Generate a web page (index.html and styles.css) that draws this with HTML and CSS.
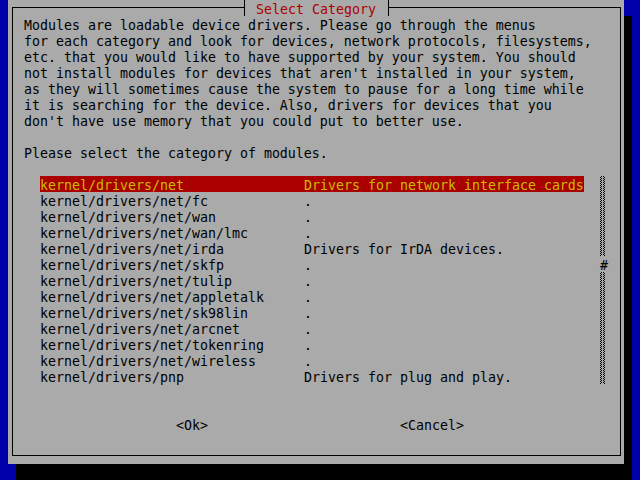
FILE: index.html
```html
<!DOCTYPE html>
<html>
<head>
<meta charset="utf-8">
<link rel="stylesheet" href="styles.css">
</head>
<body>
<div class="screen">
  <div class="dialog">
    <div class="frame">
      <div class="title">Select Category</div>
      <pre class="intro">Modules are loadable device drivers. Please go through the menus
for each category and look for devices, network protocols, filesystems,
etc. that you would like to have supported by your system. You should
not install modules for devices that aren't installed in your system,
as they will sometimes cause the system to pause for a long time while
it is searching for the device. Also, drivers for devices that you
don't have use memory that you could put to better use.</pre>
      <p class="prompt">Please select the category of modules.</p>
      <div class="listarea">
        <ul class="list">
          <li class="item sel"><span class="name">kernel/drivers/net</span><span class="desc">Drivers for network interface cards</span></li>
          <li class="item"><span class="name">kernel/drivers/net/fc</span><span class="desc">.</span></li>
          <li class="item"><span class="name">kernel/drivers/net/wan</span><span class="desc">.</span></li>
          <li class="item"><span class="name">kernel/drivers/net/wan/lmc</span><span class="desc">.</span></li>
          <li class="item"><span class="name">kernel/drivers/net/irda</span><span class="desc">Drivers for IrDA devices.</span></li>
          <li class="item"><span class="name">kernel/drivers/net/skfp</span><span class="desc">.</span></li>
          <li class="item"><span class="name">kernel/drivers/net/tulip</span><span class="desc">.</span></li>
          <li class="item"><span class="name">kernel/drivers/net/appletalk</span><span class="desc">.</span></li>
          <li class="item"><span class="name">kernel/drivers/net/sk98lin</span><span class="desc">.</span></li>
          <li class="item"><span class="name">kernel/drivers/net/arcnet</span><span class="desc">.</span></li>
          <li class="item"><span class="name">kernel/drivers/net/tokenring</span><span class="desc">.</span></li>
          <li class="item"><span class="name">kernel/drivers/net/wireless</span><span class="desc">.</span></li>
          <li class="item"><span class="name">kernel/drivers/pnp</span><span class="desc">Drivers for plug and play.</span></li>
        </ul>
        <div class="scrollbar">
          <span class="track track-top"></span>
          <span class="thumb">#</span>
          <span class="track track-bottom"></span>
        </div>
      </div>
      <div class="buttons">
        <span class="btn ok">&lt;Ok&gt;</span>
        <span class="btn cancel">&lt;Cancel&gt;</span>
      </div>
    </div>
  </div>
</div>
</body>
</html>
```
FILE: styles.css
```css
html, body {
  margin: 0;
  padding: 0;
  background: #0000aa;
  width: 640px;
  height: 480px;
  overflow: hidden;
}

.screen {
  width: 640px;
  height: 480px;
  font-family: "DejaVu Sans Mono", "Liberation Mono", monospace;
  font-size: 13.29px;
  line-height: 16px;
  color: #000;
}

.dialog {
  margin-left: 8px;
  width: 616px;
  height: 464px;
  background: #aaaaaa;
  box-shadow: 8px 16px 0 0 #000;
  padding: 7px 0 0 4px;
  box-sizing: border-box;
}

.frame {
  position: relative;
  width: 609px;
  height: 449px;
  border: 1px solid #000;
  box-sizing: border-box;
  padding: 10px 0 0 11px;
}

.title {
  position: absolute;
  top: -8px;
  left: 231px;
  height: 16px;
  box-sizing: border-box;
  padding: 4px 12px 0 11px;
  line-height: 12px;
  background: #aaaaaa;
  border-left: 1px solid #000;
  border-right: 1px solid #000;
  color: #aa0000;
  white-space: pre;
}

.intro {
  margin: 0;
  font: inherit;
  white-space: pre;
}

.prompt {
  margin: 16px 0 0 0;
  white-space: pre;
}

.listarea {
  margin: 14px 0 0 16px;
  display: flex;
  align-items: flex-start;
}

.list {
  list-style: none;
  margin: 0;
  padding: 0;
  width: 544px;
}

.item {
  display: grid;
  grid-template-columns: 264px 280px;
  height: 16px;
  box-sizing: border-box;
  padding-top: 4px;
  line-height: 12px;
  white-space: pre;
}

.item.sel {
  background: #aa0000;
  color: #c8bc00;
}

.scrollbar {
  margin-left: 16px;
  width: 8px;
  height: 208px;
  display: flex;
  flex-direction: column;
}

.track {
  display: block;
  width: 6px;
  background-image:
    repeating-conic-gradient(#000 0 25%, transparent 0 50%),
    repeating-conic-gradient(transparent 0 25%, #000 0 50%);
  background-size: 2px 2px, 2px 2px;
  background-position: 0 0, 3px 0;
  background-repeat: repeat-y, repeat-y;
}

.track-top {
  height: 80px;
}

.track-bottom {
  height: 112px;
}

.thumb {
  display: block;
  height: 16px;
  width: 8px;
  box-sizing: border-box;
  padding-top: 4px;
  line-height: 12px;
  text-align: center;
}

.buttons {
  margin-top: 34px;
  display: flex;
  white-space: pre;
}

.btn.ok {
  margin-left: 152px;
}

.btn.cancel {
  margin-left: 192px;
}
```
